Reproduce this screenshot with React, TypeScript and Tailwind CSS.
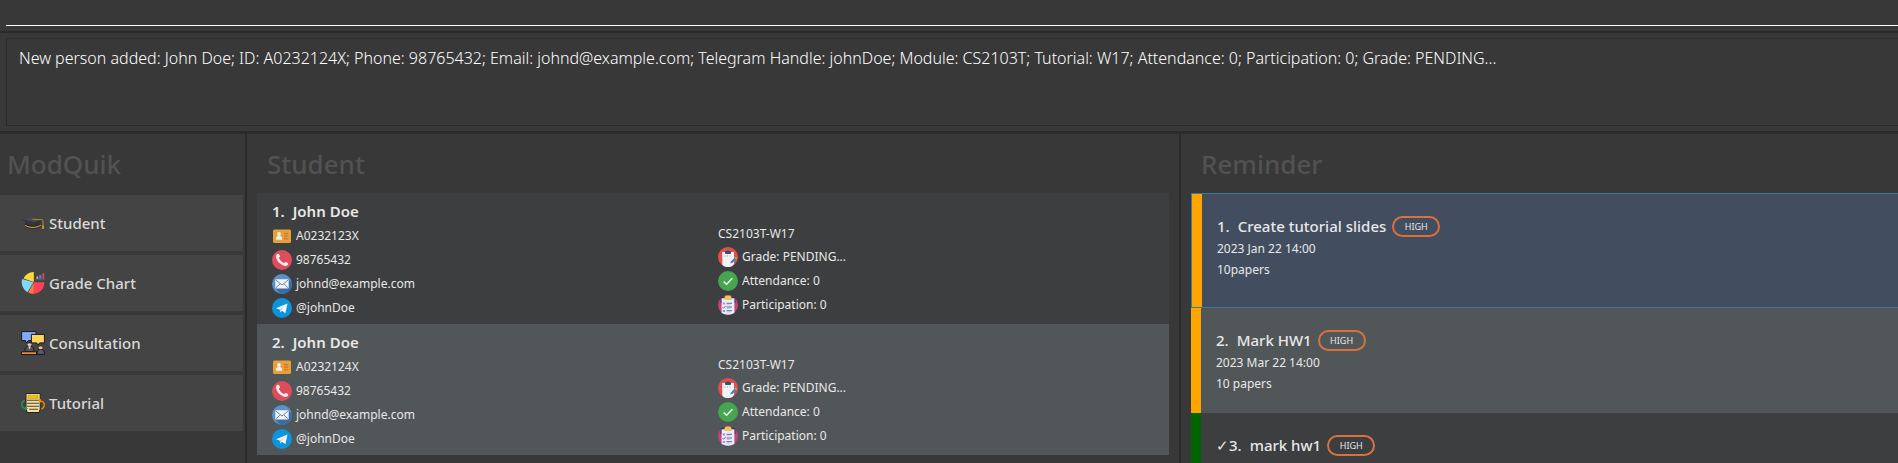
import { ReactNode } from "react";

function CapIcon() {
  return (
    <svg viewBox="0 0 24 24" className="size-6 shrink-0" aria-hidden="true">
      <path d="M4 10v6c4 3 12 3 16 0v-6l-8 2z" fill="#33343f" />
      <path d="M0 8.500 10 6.500l13.500 1.800L14 11.500z" fill="#4b4c4f" />
      <path d="M0 8.500 14 11.500l9.500-3.200" fill="none" stroke="#2c2d34" strokeWidth=".8" />
      <path d="M11.500 8.200 22 8.800v8" fill="none" stroke="#a8842c" strokeWidth="1" />
      <path d="M21.200 14.500h1.600v3.500h-1.600z" fill="#d9a521" />
      <path d="M4 13.200c5 3.200 11 3.400 16 .1" fill="none" stroke="#26272e" strokeWidth="1.400" />
      <path d="M4 14.200c5 3 11 3 16-.2" fill="none" stroke="#e0a92c" strokeWidth="1" />
    </svg>
  );
}

function ChartIcon() {
  return (
    <svg viewBox="0 0 24 24" className="size-6 shrink-0" aria-hidden="true">
      <path d="M12.800 11V1A11 11 0 0 0 2.600 7.600z" fill="#ffd93b" />
      <path d="M12.300 11.300 1.200 8A11.500 11.500 0 0 0 6.500 21.300z" fill="#80d8f8" />
      <path d="M12.800 11.500 7.200 21.600a11 11 0 0 0 5.600 1.200z" fill="#ff7a45" />
      <path d="M13 11.200h10.300A11 11 0 0 1 12.600 22.700z" fill="#ff4155" />
      <path d="M14.500 7.800h9.500v1.500h-9.500z" fill="#4b5577" />
      <path d="M15.500 5.500h1.800v2.300h-1.800z" fill="#e8b93a" />
      <path d="M18.300 4h2v3.800h-2z" fill="#5086dd" />
      <path d="M21.500 2.200h1.700v5.600h-1.700z" fill="#e8455a" />
    </svg>
  );
}

function ConsultIcon() {
  return (
    <svg viewBox="0 0 24 24" className="size-6 shrink-0" aria-hidden="true">
      <g stroke="#17181c" strokeWidth="1" strokeLinejoin="round">
        <path d="M.6.6h14.400v9H7.500L5 11.800 4.400 9.600H.6z" fill="#82aaff" />
        <path d="M10.400 3.400h13v8.500h-4.800l-1.500 2.400-1.300-2.400h-5.400z" fill="#ffd45e" />
        <path d="M4 20.500c0-4 1.500-5.500 4.500-5.500s4.500 1.500 4.500 5.500z" fill="#53555b" />
        <path d="M16 23.400c0-3.500 1-5 3.700-5s3.800 1.500 3.800 5z" fill="#5c5c60" />
        <path d="M.5 20.800h15v2.700H.5z" fill="#f58a3c" />
      </g>
      <path d="m7.300 15.300 1.200 3.200 1.200-3.200z" fill="#e9edf4" />
      <circle cx="8.500" cy="13.200" r="1.900" fill="#f6c2b4" />
      <path d="M6.400 12.800c.2-2.400 4-2.400 4.200 0-1.300-.8-2.800-.8-4.200 0z" fill="#222" />
      <circle cx="19.600" cy="16.400" r="1.900" fill="#f6b9ad" />
      <path d="M17.500 15.900c.2-2.300 4-2.300 4.200 0-1.300-.8-2.800-.8-4.200 0z" fill="#222" />
    </svg>
  );
}

function TutorialIcon() {
  return (
    <svg viewBox="0 0 24 24" className="size-6 shrink-0" aria-hidden="true">
      <path d="M5 2.500h14.200v15.500l-1 3.500H6.200L5 17.500z" fill="#f4dfa5" stroke="#26221a" strokeWidth="1" />
      <path d="M7 4.300h10v3H7z" fill="#ffc400" stroke="#c08a00" strokeWidth=".6" />
      <path d="M6 9.300h12M6 12.300h12M6 15.300h12M8 18.300h9" stroke="#4a4436" strokeWidth="1.100" />
      <path d="M3.600 9.200c-4 2.200-4 7 .8 8.300" fill="none" stroke="#18a558" strokeWidth="1.200" />
      <path d="m4 15.600 3 2-3 2z" fill="#18a558" />
      <path d="M20.400 18.200c4-2.200 4-7-.8-8.300" fill="none" stroke="#ff8a00" strokeWidth="1.200" />
      <path d="m20 7.800-3 2 3 2z" fill="#ff8a00" />
    </svg>
  );
}

function IdIcon() {
  return (
    <svg viewBox="0 0 20 20" className="size-5 shrink-0" aria-hidden="true">
      <rect x="1" y="3.500" width="18" height="13.500" rx="1.500" fill="#e5a03a" />
      <circle cx="7" cy="8" r="1.900" fill="#f0eee8" />
      <path d="M3.800 13.800c0-3 1.200-4 3.200-4s3.200 1 3.200 4z" fill="#f0eee8" />
      <path d="M12 7.700h4.300M12 10.200h4.300M12 12.700h4.300" stroke="#d5772b" strokeWidth="1.300" />
    </svg>
  );
}

function PhoneIcon() {
  return (
    <svg viewBox="0 0 20 20" className="size-5 shrink-0" aria-hidden="true">
      <circle cx="10" cy="10" r="10" fill="#df4c5c" />
      <path
        d="M5.200 4.100c1-.8 1.700-.3 2.300.8.600 1 .8 1.600 0 2.200-.6.500-.6.900-.2 1.700a9 9 0 0 0 3.900 3.900c.8.400 1.200.4 1.700-.2.600-.8 1.200-.6 2.200 0 1.100.6 1.600 1.300.8 2.300-1.200 1.500-3 1.700-5.500.3-2.700-1.500-4.200-3-5.500-5.500-1.400-2.500-1.200-4.300.3-5.500z"
        fill="#f1eeee"
      />
    </svg>
  );
}

function MailIcon() {
  return (
    <svg viewBox="0 0 20 20" className="size-5 shrink-0" aria-hidden="true">
      <circle cx="10" cy="10" r="10" fill="#5b90c8" />
      <path d="m3.500 14.500 13-9 3.300 3A10 10 0 0 1 8 19.800z" fill="#3a6da6" />
      <rect x="3.300" y="5.300" width="13.400" height="9.200" rx="1" fill="#f1f3f6" />
      <path d="m3.800 6 6.200 5 6.200-5M3.800 14l4.500-4.300M16.200 14l-4.500-4.300" fill="none" stroke="#5d7fa6" strokeWidth=".9" />
    </svg>
  );
}

function TelegramIcon() {
  return (
    <svg viewBox="0 0 20 20" className="size-5 shrink-0" aria-hidden="true">
      <circle cx="10" cy="10" r="10" fill="#0d94dd" />
      <path d="M4 10.300 15.500 5.500 13.400 15.200 9.900 12.700 8.300 14.600 7.700 11.600z" fill="#f4f7fa" />
      <path d="m7.900 11.500 5.300-3.700-4.100 4.500-.7 1.900z" fill="#b4cfe2" />
    </svg>
  );
}

function GradeIcon() {
  return (
    <svg viewBox="0 0 20 20" className="size-5 shrink-0" aria-hidden="true">
      <circle cx="10" cy="10" r="10" fill="#e04f50" />
      <path d="M4 5h12v12l-2 2.200a10 10 0 0 1-8.500-.3L4 17z" fill="#f3f3f5" />
      <path d="M4 5h1.200v13L4 17z" fill="#dccfcf" />
      <rect x="7" y="4" width="6" height="3" rx="1" fill="#33516f" />
      <circle cx="10" cy="4.200" r="1" fill="#33516f" />
      <path d="M6.500 9h1.200M9 9h1M11.500 9h1" stroke="#8aa0ae" strokeWidth=".9" />
      <path d="m12.300 16.500.8-2.300 4.500-4.500 1.500 1.500-4.500 4.500z" fill="#2f84cf" />
      <path d="m16.600 10.700 1-1 1.500 1.500-1 1z" fill="#f0b13c" />
    </svg>
  );
}

function CheckIcon() {
  return (
    <svg viewBox="0 0 20 20" className="size-5 shrink-0" aria-hidden="true">
      <circle cx="10" cy="10" r="10" fill="#46a54e" />
      <path d="m5.600 10.600 3 2.700 5.800-6" fill="none" stroke="#e9f5ea" strokeWidth="1.500" />
    </svg>
  );
}

function ParticipationIcon() {
  return (
    <svg viewBox="0 0 20 20" className="size-5 shrink-0" aria-hidden="true">
      <circle cx="10" cy="10" r="10" fill="#c8407c" />
      <path d="M2.600 2.800Q10-2 17.400 2.800V8H2.600z" fill="#2d2f68" />
      <path d="M3.600 3.200h12.800V18Q10 21.500 3.600 18z" fill="#e9edf8" />
      <path d="M6.500 1.800 8 .4h4l1.500 1.400V5h-7z" fill="#f3c64b" />
      <path d="M8.500 8.300H14M8.500 12H14M8.500 15.700H14" stroke="#5e6c9d" strokeWidth="1" />
      <path d="M8.500 9.700h4M8.500 13.400h4M8.500 17h4" stroke="#aab5d4" strokeWidth=".7" />
      <path d="M4.800 7.500h2.200v2H4.800zM4.800 15h2.200v2H4.800z" fill="#6fa8e0" />
      <path d="m4.500 12 1.200 1.300 2-2.500" fill="none" stroke="#d8457f" strokeWidth="1" />
    </svg>
  );
}

const sections = [
  { label: "Student", icon: <CapIcon /> },
  { label: "Grade Chart", icon: <ChartIcon /> },
  { label: "Consultation", icon: <ConsultIcon /> },
  { label: "Tutorial", icon: <TutorialIcon /> },
];

const students = [
  { name: "John Doe", id: "A0232123X", row: "bg-[#3c3e3f]" },
  { name: "John Doe", id: "A0232124X", row: "bg-[#515658]" },
];

const reminders = [
  { mark: "", title: "Create tutorial slides", lines: ["2023 Jan 22 14:00", "10papers"], bar: "bg-[#ffa500]", row: "h-[115px] border border-r-0 border-[#3e7b91] bg-[#424d5f]" },
  { mark: "", title: "Mark HW1", lines: ["2023 Mar 22 14:00", "10 papers"], bar: "bg-[#ffa500]", row: "h-[105px] bg-[#515658]" },
  { mark: "✓", title: "mark hw1", lines: [], bar: "bg-[#006400]", row: "h-[105px] bg-[#3c3e3f]" },
];

function Title({ children }: { children: ReactNode }) {
  return <h2 className="pt-3 text-[26px] leading-9 font-medium text-[#525252]">{children}</h2>;
}

function Detail({ icon, children }: { icon: ReactNode; children: ReactNode }) {
  return (
    <li className="flex h-6 items-center gap-1">
      {icon}
      <span>{children}</span>
    </li>
  );
}

export default function App() {
  return (
    <div className="flex h-screen flex-col overflow-hidden bg-[#383838] font-['Noto_Sans','Open_Sans',sans-serif] text-[#e8e8e8]">
      <div className="border-b-2 border-[#2a2a2a] pb-[5px] pl-[6px]">
        <input
          type="text"
          aria-label="Command"
          className="block h-[26px] w-full border-b border-white bg-transparent text-white outline-none"
        />
      </div>
      <div className="border-b-3 border-[#2a2a2a] py-[5px] pl-[6px]">
        <textarea
          readOnly
          aria-label="Result"
          className="block h-[88px] w-full resize-none border border-r-0 border-[#2a2a2a] bg-transparent px-3 py-[7px] text-base leading-6 font-light text-white outline-none"
          defaultValue="New person added: John Doe; ID: A0232124X; Phone: 98765432; Email: johnd@example.com; Telegram Handle: johnDoe; Module: CS2103T; Tutorial: W17; Attendance: 0; Participation: 0; Grade: PENDING..."
        />
      </div>
      <div className="flex min-h-0 flex-1">
        <aside className="w-[247px] shrink-0 border-r-2 border-[#2a2a2a]">
          <div className="pl-[7px]">
            <Title>ModQuik</Title>
          </div>
          <nav className="mt-[13px] mr-0.5 flex flex-col gap-1">
            {sections.map((s) => (
              <button key={s.label} type="button" className="flex h-14 items-center gap-1 bg-[#444444] pl-[21px] text-[15px] font-medium text-[#d9d9d9]">
                {s.icon}
                {s.label}
              </button>
            ))}
          </nav>
        </aside>
        <main className="min-w-0 flex-1 border-r-2 border-[#2a2a2a] px-[10px]">
          <div className="pl-[10px]">
            <Title>Student</Title>
          </div>
          <ol className="mt-[11px] text-xs leading-5">
            {students.map((s, i) => (
              <li key={s.id} className={`grid h-[131px] grid-cols-[446px_1fr] pt-[5px] pl-[15px] ${s.row}`}>
                <div>
                  <h3 className="flex h-[26px] items-center gap-2 text-[15px] font-semibold">
                    <span>{i + 1}.</span>
                    <span>{s.name}</span>
                  </h3>
                  <ul>
                    <Detail icon={<IdIcon />}>{s.id}</Detail>
                    <Detail icon={<PhoneIcon />}>98765432</Detail>
                    <Detail icon={<MailIcon />}>johnd@example.com</Detail>
                    <Detail icon={<TelegramIcon />}>@johnDoe</Detail>
                  </ul>
                </div>
                <div className="pt-[25px]">
                  <p className="leading-[22px]">CS2103T-W17</p>
                  <ul>
                    <Detail icon={<GradeIcon />}>Grade: PENDING...</Detail>
                    <Detail icon={<CheckIcon />}>Attendance: 0</Detail>
                    <Detail icon={<ParticipationIcon />}>Participation: 0</Detail>
                  </ul>
                </div>
              </li>
            ))}
          </ol>
        </main>
        <section className="w-[717px] shrink-0 pl-[10px]">
          <div className="pl-[10px]">
            <Title>Reminder</Title>
          </div>
          <ol className="mt-[11px] text-xs leading-[21px]">
            {reminders.map((r, i) => (
              <li key={r.title} className={`relative pt-5 pl-[25px] ${r.row}`}>
                <span className={`absolute inset-y-0 left-0 w-[10px] ${r.bar}`} />
                <div className="flex h-6 items-center">
                  <h3 className="flex items-center gap-2 text-[15px] font-medium">
                    <span>
                      {r.mark}
                      {i + 1}.
                    </span>
                    <span>{r.title}</span>
                  </h3>
                  <span className="ml-[6px] flex h-[21px] w-12 items-center justify-center rounded-full border-2 border-[#d7713f] text-[9px]">HIGH</span>
                </div>
                {r.lines.map((line) => (
                  <p key={line}>{line}</p>
                ))}
              </li>
            ))}
          </ol>
        </section>
      </div>
    </div>
  );
}
